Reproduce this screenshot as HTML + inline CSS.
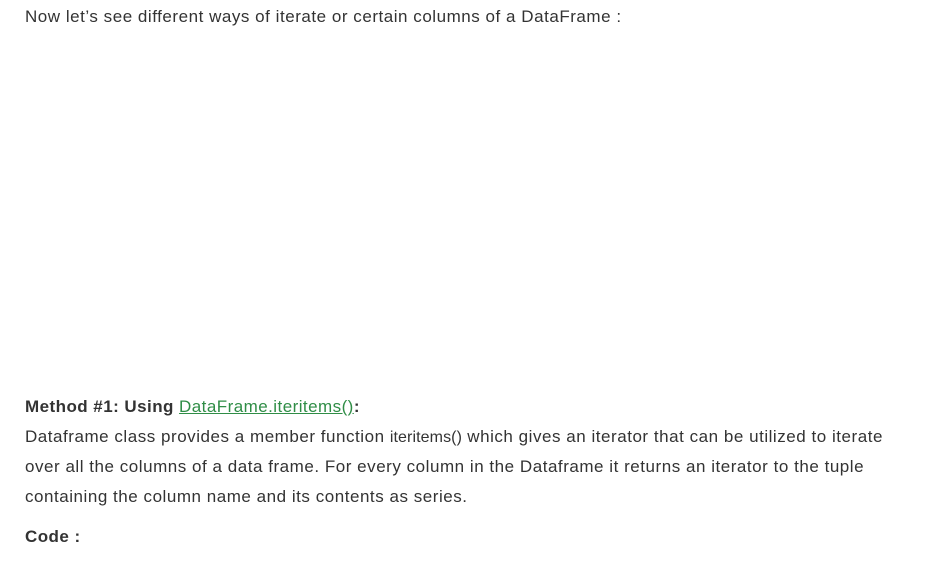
<!DOCTYPE html>
<html><head><meta charset="utf-8"><style>
body{margin:0;background:#fff;font-family:"Liberation Sans",sans-serif;color:#333;}
.p{position:absolute;left:25px;font-size:17px;white-space:nowrap;letter-spacing:0.53px}
.b{font-weight:bold;color:#333;letter-spacing:0.45px}
a{color:#2f8d46;text-decoration:underline;font-weight:normal}
.s{font-size:16px;letter-spacing:0.1px}
</style></head><body>
<div class="p" style="top:7px">Now let’s see different ways of iterate or certain columns of a DataFrame :</div>
<div class="p b" style="top:397px">Method #1: Using <a>DataFrame.iteritems()</a>:</div>
<div class="p" style="top:427px">Dataframe class provides a member function <span class="s">iteritems()</span> which gives an iterator that can be utilized to iterate</div>
<div class="p" style="top:457px">over all the columns of a data frame. For every column in the Dataframe it returns an iterator to the tuple</div>
<div class="p" style="top:487px">containing the column name and its contents as series.</div>
<div class="p b" style="top:527px">Code :</div>
</body></html>
